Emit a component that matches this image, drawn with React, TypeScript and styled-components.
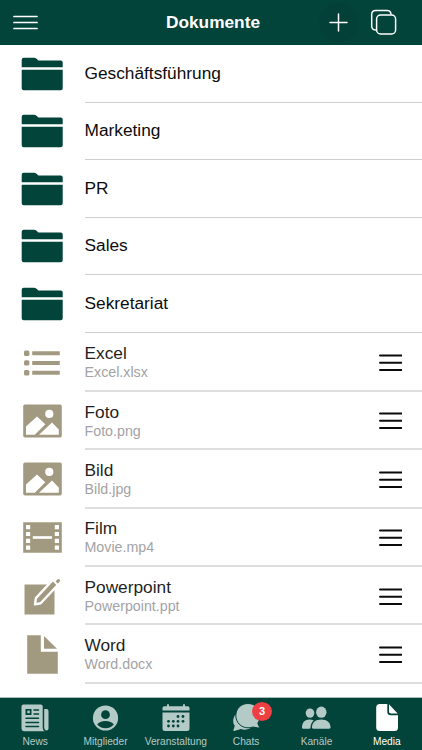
import React from "react";
import styled, { createGlobalStyle } from "styled-components";

const GREEN = "#02433a";
const SAND = "#a29a80";
const MINT = "#b4cac7";

const GlobalStyle = createGlobalStyle`
  * { box-sizing: border-box; }
  body { margin: 0; background: #fff; }
  button { border: 0; padding: 0; background: none; font: inherit; color: inherit; }
`;

const Screen = styled.div`
  display: flex;
  flex-direction: column;
  width: 422px;
  height: 750px;
  overflow: hidden;
  background: #fff;
  font-family: "Liberation Sans", Arial, sans-serif;
`;

const Header = styled.header`
  flex: none;
  height: 45px;
  display: grid;
  grid-template-columns: 128px 170px 124px;
  background: ${GREEN};
  color: #fff;
`;

const HeaderSide = styled.div`
  display: flex;
  align-items: flex-start;
`;

const MenuButton = styled.button`
  display: flex;
  margin: 15px 0 0 13px;
`;

const Title = styled.h1`
  margin: 0;
  font-size: 17.3px;
  line-height: 44px;
  text-align: center;
  white-space: nowrap;
`;

const RoundButton = styled.button`
  display: flex;
  align-items: center;
  justify-content: center;
  width: 39px;
  height: 39px;
  margin: 3px 0 0 21px;
  border-radius: 50%;
  background: #024038;

  & + & {
    margin-left: 6px;
    background: none;
  }
`;

const List = styled.ul`
  flex: 1;
  margin: 0;
  padding: 0;
  list-style: none;
`;

const Row = styled.li<{ $file?: boolean; $first?: boolean }>`
  display: flex;
  height: ${(p) => (p.$file ? "58.4px" : "57.5px")};
  margin-top: ${(p) => (p.$first ? "1px" : "0")};
`;

const IconCell = styled.div`
  flex: none;
  width: 84.5px;
  display: flex;
  align-items: center;
  justify-content: center;
`;

const RowBody = styled.div<{ $file?: boolean }>`
  flex: 1;
  display: flex;
  align-items: center;
  justify-content: space-between;
  padding-right: 20px;
  border-bottom: ${(p) => (p.$file ? "2px solid #dedede" : "1px solid #cfcfcf")};
`;

const Names = styled.div`
  display: flex;
  flex-direction: column;
  padding-top: 2px;
`;

const Name = styled.span<{ $file?: boolean }>`
  font-size: 17.3px;
  line-height: 20px;
  padding-bottom: ${(p) => (p.$file ? "0" : "1px")};
  color: ${(p) => (p.$file ? "#1f1f21" : "#0c0c0c")};
`;

const FileName = styled.span`
  font-size: 14.25px;
  line-height: 19px;
  color: #a3a3a5;
`;

const Handle = styled.button`
  display: flex;
  margin-top: 2px;
`;

const TabBar = styled.nav`
  flex: none;
  height: 53px;
  display: grid;
  grid-template-columns: repeat(6, 1fr);
  border-top: 1px solid #a9bfbb;
  background: ${GREEN};
`;

const Tab = styled.button<{ $active?: boolean }>`
  position: relative;
  display: flex;
  flex-direction: column;
  align-items: center;
  padding-top: 5px;
  color: ${(p) => (p.$active ? "#fff" : MINT)};
`;

const TabLabel = styled.span`
  margin-top: 3px;
  font-size: 10.2px;
  line-height: 13px;
  white-space: nowrap;
`;

const Badge = styled.span`
  position: absolute;
  top: 4px;
  left: 41px;
  width: 20px;
  height: 19px;
  border-radius: 50%;
  background: #ee4043;
  color: #fff;
  font-size: 11px;
  font-weight: bold;
  line-height: 19px;
  text-align: center;
`;

const FolderIcon = () => (
  <svg width="42" height="34" viewBox="0 0 42 34" fill={GREEN}>
    <path d="M.7 10.200V2.700Q.7.700 2.700.700H13q1.300 0 2.200.9l2.200 2h22.300q2 0 2 2v4.600Z" />
    <path d="M.7 12.700h41v18.600q0 2-2 2h-37q-2 0-2-2Z" />
  </svg>
);

const ListIcon = () => (
  <svg width="36" height="26" viewBox="0 0 36 26" fill={SAND}>
    {[0.5, 10.200, 20].map((y) => (
      <React.Fragment key={y}>
        <rect x="0" y={y} width="5.400" height="5.400" rx="1.500" />
        <rect x="8.200" y={y + 0.700} width="27.600" height="4" rx=".4" />
      </React.Fragment>
    ))}
  </svg>
);

const PictureIcon = () => (
  <svg width="39" height="34" viewBox="0 0 39 34" fill={SAND}>
    <rect x=".2" y=".5" width="38.600" height="33" rx="1.800" />
    <g fill="#fff">
      <circle cx="26.300" cy="9.900" r="4.100" />
      <path d="M3 22.500 14 12.400 22.300 20.200 11.800 30.800H3Z" />
      <path d="M16 30.800 29 18.500 35.800 25.400V30.800Z" />
    </g>
  </svg>
);

const FilmIcon = () => (
  <svg width="39" height="31" viewBox="0 0 39 31" fill={SAND}>
    <path d="M.2.300h38.600v30.400H.2Z" />
    <g fill="#fff">
      {[3, 9.900, 16.800, 23.600].map((y) => (
        <React.Fragment key={y}>
          <rect x="3" y={y} width="4.200" height="4.200" rx=".3" />
          <rect x="31.800" y={y} width="4.200" height="4.200" rx=".3" />
        </React.Fragment>
      ))}
      <rect x="9.800" y="14.200" width="19.200" height="2.600" />
    </g>
  </svg>
);

const EditIcon = () => (
  <svg width="37" height="37" viewBox="0 0 37 37">
    <path d="M.5 6.500h30v30H.5Z" fill={SAND} />
    <path d="m29 1.800 5 5-17.300 18.500-5.700 1.100.9-6.300Z" fill={SAND} stroke="#fff" strokeWidth="2.400" strokeLinejoin="round" />
    <path d="m31.200 3.700 2.200-2.300q1.100-1 2.200 0 1.100 1.100.1 2.200l-2.200 2.300Z" fill={SAND} />
    <path d="m29.600 2.500 4.800 4.800" stroke="#fff" strokeWidth="1.300" />
  </svg>
);

const DocIcon = () => (
  <svg width="31" height="39" viewBox="0 0 31 39" fill={SAND}>
    <path d="M.2.200H13.800V16.700H30.800V38.800H.2Z" />
    <path d="M17 .900 30 13.800H17Z" />
  </svg>
);

const PlusIcon = () => (
  <svg width="19" height="19" viewBox="0 0 19 19" stroke="#fff" strokeWidth="1.500" strokeLinecap="round">
    <path d="M9.500 1v17M1 9.500h17" />
  </svg>
);

const CopyIcon = () => (
  <svg width="27" height="27" viewBox="0 0 27 27" fill="none" stroke="#fff" strokeWidth="1.500">
    <rect x="6.600" y="6" width="19" height="19" rx="4" />
    <path d="M6.200 21C3.200 21 1.700 19.500 1.700 17V5.500Q1.700 1.500 5.700 1.500H17C19.600 1.500 21 3 21 5.600" />
  </svg>
);

const Lines = ({ width, gap, color, stroke }: { width: number; gap: number; color: string; stroke: number }) => (
  <svg width={width} height={gap * 2 + 3} viewBox={`0 0 ${width} ${gap * 2 + 3}`} stroke={color} strokeWidth={stroke} strokeLinecap="round">
    <path d={`M1 1.500H${width - 1}M1 ${gap + 1.500}H${width - 1}M1 ${gap * 2 + 1.500}H${width - 1}`} />
  </svg>
);

const NewsIcon = () => (
  <svg width="28" height="29" viewBox="0 0 28 29" fill="currentColor">
    <path d="M2.500 1.500h17.200q2 0 2 2v21q0 3.200 2 3.800H3.500q-3 0-3-3V3.500q0-2 2-2Z" />
    <path d="M23.200 6h2.300q2 0 2 2v17.500q0 2-1.900 2t-2.400-2.500Z" />
    <path d="M4.500 6h6v6h-6Z" fill={GREEN} />
    <path d="M6.300 7.600h2.500v2.600H6.300Z" />
    <path d="M13 7h4.500M13 11h4.500M5 15.300h12.500M5 19.500h12.500M5 23.600h12.500" stroke={GREEN} strokeWidth="1.500" strokeLinecap="round" />
  </svg>
);

const UserIcon = () => (
  <svg width="28" height="29" viewBox="0 0 28 29">
    <circle cx="14.500" cy="15" r="12.600" fill="currentColor" />
    <circle cx="14.500" cy="11.700" r="4.400" fill={GREEN} />
    <path d="M6.200 21.500Q8.500 18 14.500 18t8.300 3.500Q19.800 25.200 14.500 25.200t-8.300-3.700Z" fill={GREEN} />
  </svg>
);

const CalendarIcon = () => (
  <svg width="28" height="29" viewBox="0 0 28 29" fill="currentColor">
    <path d="M.5 7.500V5q0-1.800 1.800-1.800H5V2.300q0-1.300 1-1.300t1 1.300v.9h14v-.9Q21 1 22 1t1 1.300v.9h2.700q1.800 0 1.800 1.800v2.500Z" />
    <path d="M.5 9.500h27V25.500q0 2.500-2.500 2.500H3q-2.500 0-2.500-2.500Z" />
    <g fill={GREEN}>
      {[[16,13.500],[21,13.500],[6.500,18.300],[11.300,18.300],[16,18.300],[21,18.300],[6.500,23],[11.300,23],[16,23]].map(([x, y]) => (
        <circle key={`${x}-${y}`} cx={x} cy={y} r="1.400" />
      ))}
    </g>
  </svg>
);

const ChatsIcon = () => (
  <svg width="28" height="29" viewBox="0 0 28 29" fill="currentColor">
    <path d="M3 12C.7 16 .6 20 2.800 22.800L1.400 27q-.3 1 .8.900L9 26c3 1.100 6.500.800 9.500-1Z" />
    <path d="M16 .500C9 .500 3.800 5.700 3.800 12.500S9 24.800 16 24.800c2 0 3.500-.2 5-.8l5.200 1q1.600.1 1.100-1.200l-1.500-3.500C27.500 17.500 28 15 28 12.500 28 5.700 23 .500 16 .500Z" stroke={GREEN} strokeWidth="1" />
  </svg>
);

const UsersIcon = () => (
  <svg width="30" height="29" viewBox="0 0 30 29" fill="currentColor">
    <ellipse cx="9" cy="10.100" rx="4.300" ry="4.700" />
    <path d="M1 24.700C1 19.500 4 16.600 8.500 16.600q2.500 0 4.300 1Q9.700 20 9.500 24.700q-.2 1-1.200 1H2.200q-1.200 0-1.200-1Z" />
    <ellipse cx="20.300" cy="9.200" rx="5.200" ry="5.600" />
    <path d="M11 24.200C11.200 19.300 14.800 16.600 20.200 16.600S29.200 19.300 29.500 24.200q0 1.600-1.700 1.600H12.700q-1.700 0-1.700-1.600Z" />
  </svg>
);

const MediaIcon = () => (
  <svg width="28" height="29" viewBox="0 0 28 29" fill="currentColor">
    <path d="M6.700 1h7.600v7.700q0 3.600 3.500 3.600h7.200v12.200q0 3.500-3.500 3.500H6.700q-3.500 0-3.500-3.500v-20Q3.200 1 6.700 1Z" />
    <path d="M16 1.300 24.700 10.600H18q-2 0-2-2Z" />
  </svg>
);

const folders = ["Geschäftsführung", "Marketing", "PR", "Sales", "Sekretariat"];

const files = [
  { name: "Excel", file: "Excel.xlsx", Icon: ListIcon },
  { name: "Foto", file: "Foto.png", Icon: PictureIcon },
  { name: "Bild", file: "Bild.jpg", Icon: PictureIcon },
  { name: "Film", file: "Movie.mp4", Icon: FilmIcon },
  { name: "Powerpoint", file: "Powerpoint.ppt", Icon: EditIcon },
  { name: "Word", file: "Word.docx", Icon: DocIcon },
];

const tabs = [
  { label: "News", Icon: NewsIcon },
  { label: "Mitglieder", Icon: UserIcon },
  { label: "Veranstaltung", Icon: CalendarIcon },
  { label: "Chats", Icon: ChatsIcon, badge: 3 },
  { label: "Kanäle", Icon: UsersIcon },
  { label: "Media", Icon: MediaIcon, active: true },
];

export default function App() {
  return (
    <Screen>
      <GlobalStyle />
      <Header>
        <HeaderSide>
          <MenuButton aria-label="Menü">
            <Lines width={25} gap={6} color="#fff" stroke={1.7} />
          </MenuButton>
        </HeaderSide>
        <Title>Dokumente</Title>
        <HeaderSide>
          <RoundButton aria-label="Hinzufügen"><PlusIcon /></RoundButton>
          <RoundButton aria-label="Kopieren"><CopyIcon /></RoundButton>
        </HeaderSide>
      </Header>
      <List>
        {folders.map((name) => (
          <Row key={name}>
            <IconCell><FolderIcon /></IconCell>
            <RowBody><Name>{name}</Name></RowBody>
          </Row>
        ))}
        {files.map(({ name, file, Icon }, index) => (
          <Row key={name} $file $first={index === 0}>
            <IconCell><Icon /></IconCell>
            <RowBody $file>
              <Names>
                <Name $file>{name}</Name>
                <FileName>{file}</FileName>
              </Names>
              <Handle aria-label="Verschieben">
                <Lines width={23.500} gap={7.2} color="#0b0b0b" stroke={2} />
              </Handle>
            </RowBody>
          </Row>
        ))}
      </List>
      <TabBar>
        {tabs.map(({ label, Icon, badge, active }) => (
          <Tab key={label} $active={active}>
            <Icon />
            <TabLabel>{label}</TabLabel>
            {badge && <Badge>{badge}</Badge>}
          </Tab>
        ))}
      </TabBar>
    </Screen>
  );
}
